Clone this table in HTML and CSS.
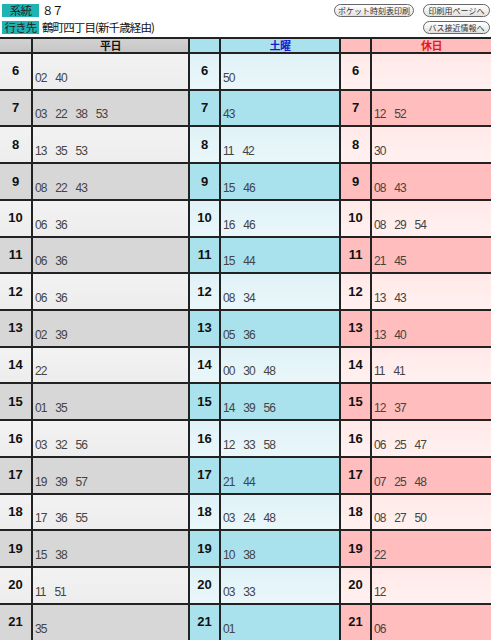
FILE: index.html
```html
<!DOCTYPE html>
<html lang="ja">
<head>
<meta charset="utf-8">
<title>時刻表 系統87</title>
<link rel="stylesheet" href="styles.css">
</head>
<body>
<div class="top">
  <div class="info">
    <div class="line"><span class="label">系統</span><span class="value num">８７</span></div>
    <div class="line"><span class="label">行き先</span><span class="value">鶴町四丁目(新千歳経由)</span></div>
  </div>
  <div class="links">
    <div class="linkrow">
      <a class="btn wide">ポケット時刻表印刷</a>
      <a class="btn">印刷用ページへ</a>
    </div>
    <div class="linkrow">
      <a class="btn">バス接近情報へ</a>
    </div>
  </div>
</div>
<div class="tt">
  <div class="row head">
    <div class="wk"></div><div class="wk title">平日</div>
    <div class="sa"></div><div class="sa title blue">土曜</div>
    <div class="ho"></div><div class="ho title red">休日</div>
  </div>
  <div class="row">
    <div class="wk h">6</div><div class="wk m">02 40</div>
    <div class="sa h">6</div><div class="sa m">50</div>
    <div class="ho h">6</div><div class="ho m"></div>
  </div>
  <div class="row alt">
    <div class="wk h">7</div><div class="wk m">03 22 38 53</div>
    <div class="sa h">7</div><div class="sa m">43</div>
    <div class="ho h">7</div><div class="ho m">12 52</div>
  </div>
  <div class="row">
    <div class="wk h">8</div><div class="wk m">13 35 53</div>
    <div class="sa h">8</div><div class="sa m">11 42</div>
    <div class="ho h">8</div><div class="ho m">30</div>
  </div>
  <div class="row alt">
    <div class="wk h">9</div><div class="wk m">08 22 43</div>
    <div class="sa h">9</div><div class="sa m">15 46</div>
    <div class="ho h">9</div><div class="ho m">08 43</div>
  </div>
  <div class="row">
    <div class="wk h">10</div><div class="wk m">06 36</div>
    <div class="sa h">10</div><div class="sa m">16 46</div>
    <div class="ho h">10</div><div class="ho m">08 29 54</div>
  </div>
  <div class="row alt">
    <div class="wk h">11</div><div class="wk m">06 36</div>
    <div class="sa h">11</div><div class="sa m">15 44</div>
    <div class="ho h">11</div><div class="ho m">21 45</div>
  </div>
  <div class="row">
    <div class="wk h">12</div><div class="wk m">06 36</div>
    <div class="sa h">12</div><div class="sa m">08 34</div>
    <div class="ho h">12</div><div class="ho m">13 43</div>
  </div>
  <div class="row alt">
    <div class="wk h">13</div><div class="wk m">02 39</div>
    <div class="sa h">13</div><div class="sa m">05 36</div>
    <div class="ho h">13</div><div class="ho m">13 40</div>
  </div>
  <div class="row">
    <div class="wk h">14</div><div class="wk m">22</div>
    <div class="sa h">14</div><div class="sa m">00 30 48</div>
    <div class="ho h">14</div><div class="ho m">11 41</div>
  </div>
  <div class="row alt">
    <div class="wk h">15</div><div class="wk m">01 35</div>
    <div class="sa h">15</div><div class="sa m">14 39 56</div>
    <div class="ho h">15</div><div class="ho m">12 37</div>
  </div>
  <div class="row">
    <div class="wk h">16</div><div class="wk m">03 32 56</div>
    <div class="sa h">16</div><div class="sa m">12 33 58</div>
    <div class="ho h">16</div><div class="ho m">06 25 47</div>
  </div>
  <div class="row alt">
    <div class="wk h">17</div><div class="wk m">19 39 57</div>
    <div class="sa h">17</div><div class="sa m">21 44</div>
    <div class="ho h">17</div><div class="ho m">07 25 48</div>
  </div>
  <div class="row">
    <div class="wk h">18</div><div class="wk m">17 36 55</div>
    <div class="sa h">18</div><div class="sa m">03 24 48</div>
    <div class="ho h">18</div><div class="ho m">08 27 50</div>
  </div>
  <div class="row alt">
    <div class="wk h">19</div><div class="wk m">15 38</div>
    <div class="sa h">19</div><div class="sa m">10 38</div>
    <div class="ho h">19</div><div class="ho m">22</div>
  </div>
  <div class="row">
    <div class="wk h">20</div><div class="wk m">11 51</div>
    <div class="sa h">20</div><div class="sa m">03 33</div>
    <div class="ho h">20</div><div class="ho m">12</div>
  </div>
  <div class="row alt">
    <div class="wk h">21</div><div class="wk m">35</div>
    <div class="sa h">21</div><div class="sa m">01</div>
    <div class="ho h">21</div><div class="ho m">06</div>
  </div>
</div>
</body>
</html>
```

FILE: styles.css
```css
* { box-sizing: border-box; }
html, body {
  margin: 0;
  padding: 0;
  background: #fff;
}
body {
  font-family: "Liberation Sans", "Noto Sans CJK JP", sans-serif;
  color: #111;
  width: 491px;
  height: 640px;
  overflow: hidden;
}

/* top info area */
.top {
  display: flex;
  justify-content: space-between;
  height: 37px;
}
.info {
  display: flex;
  flex-direction: column;
  gap: 4px;
  padding: 4px 0 0 2px;
}
.line {
  display: flex;
  align-items: center;
  height: 13px;
}
.label {
  width: 37px;
  height: 13px;
  background: #1fb3b4;
  color: #222;
  font-family: "Noto Sans CJK JP", sans-serif;
  font-size: 11.5px;
  line-height: 13px;
  letter-spacing: -0.8px;
  text-align: center;
}
.value {
  margin-left: 3px;
  font-family: "Noto Sans CJK JP", sans-serif;
  font-size: 11.5px;
  line-height: 13px;
  letter-spacing: -0.9px;
  color: #111;
}
.value.num {
  letter-spacing: -1.5px;
}
.links {
  display: flex;
  flex-direction: column;
  align-items: flex-end;
  gap: 4px;
  padding: 4px 1px 0 0;
}
.linkrow {
  display: flex;
  gap: 9px;
}
.btn {
  display: block;
  width: 67px;
  height: 13px;
  border: 1px solid #666;
  border-radius: 7px;
  background: linear-gradient(#ffffff, #e2e2e2);
  color: #333;
  font-family: "Noto Sans CJK JP", sans-serif;
  font-size: 8px;
  line-height: 11px;
  text-align: center;
  white-space: nowrap;
}
.btn.wide {
  width: 80px;
}

/* timetable grid */
.tt {
  display: grid;
  grid-template-columns: 31px 155px 29px 118px 29px 1fr;
  grid-template-rows: 13px;
  grid-auto-rows: 34.73px;
  column-gap: 2px;
  row-gap: 2px;
  padding-top: 2px;
  background: #222;
}
.row { display: contents; }

.wk { background: linear-gradient(#f2f2f2, #ededed); }
.sa { background: linear-gradient(#e0f2f7, #eaf7fa); }
.ho { background: linear-gradient(#ffe9e8, #fff1f0); }
.row.alt .wk { background: #d7d7d7; }
.row.alt .sa { background: #a9e1ed; }
.row.alt .ho { background: #ffbdbd; }
.row.head .wk { background: linear-gradient(#d2d2d2, #c6c6c6); }
.row.head .sa { background: #a9e1ed; }
.row.head .ho { background: #ffbdbd; }

.title {
  display: flex;
  align-items: center;
  justify-content: center;
  font-family: "Noto Sans CJK JP", sans-serif;
  font-weight: bold;
  font-size: 11px;
  line-height: 13px;
  letter-spacing: -0.5px;
  color: #111;
}
.title.blue { color: #1a1acc; }
.title.red { color: #e81818; }

.h {
  display: flex;
  align-items: center;
  justify-content: center;
  font-weight: bold;
  font-size: 13px;
  color: #111;
  padding-bottom: 1px;
}
.m {
  display: flex;
  align-items: flex-end;
  padding: 0 0 4px 2px;
  font-size: 12px;
  line-height: 13px;
  letter-spacing: -1px;
  word-spacing: 6.6px;
  color: #444;
  white-space: pre;
}
```
